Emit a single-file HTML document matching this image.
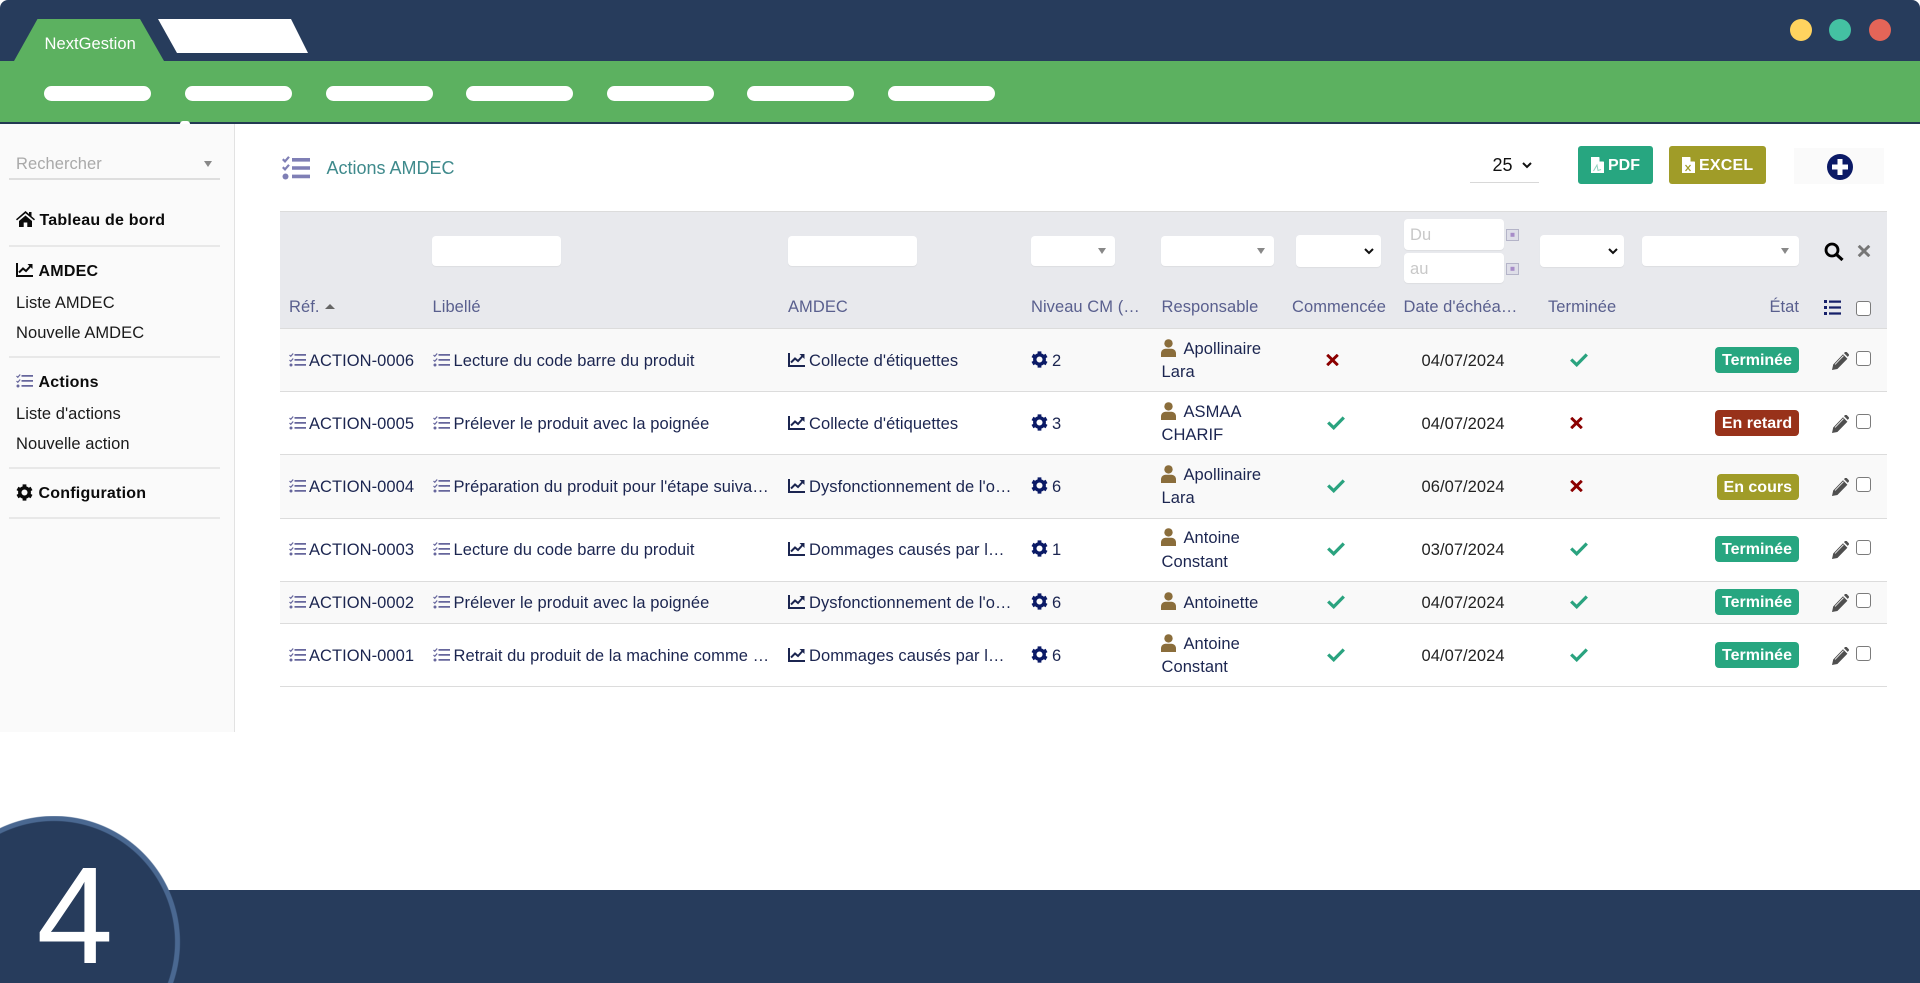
<!DOCTYPE html>
<html lang="fr"><head><meta charset="utf-8"><title>NextGestion</title>
<style>
html,body{margin:0;padding:0;background:#fff;width:1920px;height:983px;overflow:hidden}
body{font-family:"Liberation Sans",Arial,sans-serif;font-size:16px;color:#1b2550}
div,span,svg{position:absolute;display:block}
svg{overflow:visible}
#root{left:0;top:0;width:1920px;height:983px;overflow:hidden}
.t{height:24px;line-height:24px;white-space:nowrap;font-size:16.5px;letter-spacing:.05px;margin-top:-11px}
.s{color:#1a1a1a;margin-top:-11px}
.b{font-weight:700;color:#0b0b0b;font-size:16px;letter-spacing:.22px;margin-top:-10.500px}
.h{color:#595f8e;margin-top:-11px}
.hr{left:9px;width:211px;height:2px;background:#e8e8e8}
.inp{background:#fff;border-radius:4px;box-shadow:0 1px 1px rgba(0,0,0,.05)}
.tri{width:0;height:0;border-left:4.500px solid transparent;border-right:4.500px solid transparent;border-top:6px solid #888}
.pill{top:86px;width:107px;height:15px;border-radius:8px;background:#fff}
.dot{top:19px;width:22px;height:22px;border-radius:50%}
.rb{left:280px;width:1607px;background:#fff;border-bottom:1px solid #dcdcdc;box-sizing:border-box}
.g{background:#f9f9f9}
.row{left:0;top:0;width:1920px;height:0}
.ci{left:289px;top:-7.500px;width:17px;height:14px;color:#66669c}
.li{left:432.500px;top:-7.500px;width:17px;height:14px;color:#66669c}
.ai{left:788px;top:-7px;width:17px;height:14px}
.gi{left:1031px;top:-9px;width:17px;height:17px;color:#0b1a66}
.pi{left:1161px;width:15px;height:18px;color:#8a6d3b}
.ed{left:1832px;top:-8px;width:17px;height:18px;color:#4f4f4f}
.cb{left:1856px;top:-9px;width:15px;height:15px;box-sizing:border-box;border:1.500px solid #7b7b7b;border-radius:3px;background:#fff}
.yes{top:-7px;width:18px;height:14px;color:#2aa37f}
.no{top:-6px;width:13px;height:12px;color:#8b0000}
.bd{left:1715px;top:-13px;width:84px;height:26px;border-radius:4px;color:#fff;font-weight:700;text-align:center;line-height:27px}
.btn{top:146px;height:38px;border-radius:3px;color:#fff;font-weight:700;line-height:39px}
.d{left:1421.500px;color:#222}
</style></head><body>
<div id="root">
<svg width="0" height="0" style="left:0;top:0">
<defs>
<symbol id="tasks" viewBox="0 0 28 24"><path fill="currentColor" d="M10 2h18v3.600H10zM10 10.200h18v3.600H10zM10 18.600h18v3.600H10z"/><path fill="none" stroke="currentColor" stroke-width="2.200" d="M.8 3.200l2.200 2.200L7 .8M.8 11.200l2.200 2.200L7 8.800"/><circle cx="3.500" cy="20.500" r="3" fill="currentColor"/></symbol>
<symbol id="tasks2" viewBox="0 0 17 14"><path fill="currentColor" d="M5.500 1h11.500v1.700H5.500zM5.500 6h11.500v1.700H5.500zM5.500 11h11.500v1.700H5.500z"/><path fill="none" stroke="currentColor" stroke-width="1.200" d="M.5 2l1.300 1.300L4.200.5M.5 7l1.300 1.300L4.200 5.500"/><circle cx="2" cy="12" r="1.500" fill="currentColor"/></symbol>
<symbol id="home" viewBox="0 0 19 16"><path fill="currentColor" d="M9.500 0L13 3V1h2.500v4.200L19 8.300l-1 1.100-8.500-7.200L1 9.400 0 8.300zM3 10l6.500-5.500L16 10v6h-4.700v-4.500H7.700V16H3z"/></symbol>
<symbol id="chart" viewBox="0 0 17 14"><path fill="currentColor" d="M0 0h2v12h15v2H0z"/><path fill="none" stroke="currentColor" stroke-width="2" d="M3 9.500l4-4 3 2.500 5-5.500"/><path fill="currentColor" d="M11.500 1H16.500V6z"/></symbol>
<symbol id="cog" viewBox="-9 -9 18 18"><circle r="5" fill="none" stroke="currentColor" stroke-width="3.600"/><g fill="currentColor"><path d="M-2-8.600H2V-5H-2z"/><path d="M-2-8.600H2V-5H-2z" transform="rotate(60)"/><path d="M-2-8.600H2V-5H-2z" transform="rotate(120)"/><path d="M-2-8.600H2V-5H-2z" transform="rotate(180)"/><path d="M-2-8.600H2V-5H-2z" transform="rotate(240)"/><path d="M-2-8.600H2V-5H-2z" transform="rotate(300)"/></g></symbol>
<symbol id="user" viewBox="0 0 15 18"><circle cx="7.500" cy="4.400" r="4.200" fill="currentColor"/><path fill="currentColor" d="M0 18v-3.500C0 11.500 2.300 9.800 4.500 9.800h6c2.200 0 4.500 1.700 4.500 4.700V18z"/></symbol>
<symbol id="pen" viewBox="0 0 17 18"><path fill="currentColor" d="M0 18l1.200-5.500L11 2.200l4.400 4.600L5.400 17zM12 1.100L13 0c.5-.4 1.200-.4 1.700 0l2 2.100c.4.500.4 1.200 0 1.700l-1 1.100z"/><path stroke="#fff" stroke-width=".8" d="M3 12.500l8.500-8.800"/></symbol>
<symbol id="yes" viewBox="0 0 18 14"><path fill="none" stroke="currentColor" stroke-width="3.200" d="M1.200 6.500l5.500 5.300L16.800 1.500"/></symbol>
<symbol id="no" viewBox="0 0 13 12"><path fill="none" stroke="currentColor" stroke-width="2.900" d="M1.200.8l10.600 10.400M11.800.8L1.200 11.200"/></symbol>
<symbol id="cal" viewBox="0 0 13 12"><path fill="#b4b4c8" d="M0 0h13v12H0z"/><path fill="#dedee8" d="M1 1h11v10H1z"/><path fill="#a78cc8" d="M4.500 3.800h4v4h-4z"/></symbol>
<symbol id="chev" viewBox="0 0 10 7"><path fill="none" stroke="#111" stroke-width="2" d="M1 1l4 4 4-4"/></symbol>
</defs></svg>

<!-- Top bars -->
<div style="left:0;top:0;width:1920px;height:61px;background:#273c5c;border-radius:8px 8px 0 0"></div>
<div style="left:0;top:61px;width:1920px;height:61px;background:#5cb160"></div>
<div style="left:0;top:122px;width:1920px;height:2px;background:#233a52"></div>
<svg style="left:0;top:0" width="320" height="62"><polygon points="37.500,19 140,19 164,61 14,61" fill="#5cb160"/><polygon points="158,19 291,19 308,53 177,53" fill="#fff"/></svg>
<div class="t" style="left:44.500px;top:43px;color:#fff">NextGestion</div>
<div class="pill" style="left:44px"></div><div class="pill" style="left:185px"></div><div class="pill" style="left:326px"></div><div class="pill" style="left:466px"></div><div class="pill" style="left:607px"></div><div class="pill" style="left:747px"></div><div class="pill" style="left:888px"></div>
<div style="left:180px;top:121px;width:10px;height:3px;background:#fff;border-radius:5px 5px 0 0"></div>
<div class="dot" style="left:1790px;background:#ffd35f"></div>
<div class="dot" style="left:1829px;background:#44c1a2"></div>
<div class="dot" style="left:1869px;background:#e46558"></div>

<!-- Sidebar -->
<div style="left:0;top:124px;width:234px;height:608px;background:#fafafa;border-right:1px solid #e2e2e2"></div>
<div class="t" style="left:16px;top:163px;color:#a9a9a9">Rechercher</div>
<div class="tri" style="left:204px;top:161px"></div>
<div style="left:9px;top:178px;width:211px;height:2px;background:#dedede"></div>
<svg style="left:16px;top:211px;color:#0b0b0b" width="19" height="16"><use href="#home"/></svg>
<div class="t b" style="left:39.500px;top:219px">Tableau de bord</div>
<div class="hr" style="top:245px"></div>
<svg style="left:16px;top:263px;color:#0b0b0b" width="17" height="14"><use href="#chart"/></svg>
<div class="t b" style="left:38.500px;top:270px">AMDEC</div>
<div class="t s" style="left:16px;top:302px">Liste AMDEC</div>
<div class="t s" style="left:16px;top:332px">Nouvelle AMDEC</div>
<div class="hr" style="top:356px"></div>
<svg style="left:16px;top:374px;color:#66669c" width="17" height="14"><use href="#tasks2"/></svg>
<div class="t b" style="left:38.500px;top:381px">Actions</div>
<div class="t s" style="left:16px;top:413px">Liste d'actions</div>
<div class="t s" style="left:16px;top:443px">Nouvelle action</div>
<div class="hr" style="top:467px"></div>
<svg style="left:16px;top:484px;color:#0b0b0b" width="17" height="17"><use href="#cog"/></svg>
<div class="t b" style="left:38.500px;top:492px">Configuration</div>
<div class="hr" style="top:517px"></div>

<!-- Title and toolbar -->
<svg style="left:281.500px;top:156px;color:#7f7fb5" width="28" height="24"><use href="#tasks"/></svg>
<div class="t" style="left:326.500px;top:168px;font-size:18px;letter-spacing:0;margin-top:-12px;color:#3f8a8c">Actions AMDEC</div>
<div class="t" style="left:1492.500px;top:165px;font-size:18px;letter-spacing:0;margin-top:-12px;color:#111">25</div>
<svg style="left:1522px;top:161.500px" width="10" height="7"><use href="#chev"/></svg>
<div style="left:1470px;top:182px;width:69px;height:1px;background:#d8d8d8"></div>
<div class="btn" style="left:1578px;width:75px;background:#27a680"><svg style="left:12.500px;top:11px" width="13" height="16"><path fill="#fff" d="M0 0h8l5 5v11H0z"/><path fill="#27a680" d="M8.500 0v4.500H13z"/><path fill="none" stroke="#8fd3bf" d="M2.500 14l3.500-6 1 5.500 3-1"/></svg><span style="left:30px;top:0">PDF</span></div>
<div class="btn" style="left:1669px;width:97px;background:#a09c28"><svg style="left:12.500px;top:11px" width="13" height="16"><path fill="#fff" d="M0 0h8l5 5v11H0z"/><path fill="#a09c28" d="M8.500 0v4.500H13z"/><path fill="none" stroke="#a09c28" stroke-width="1.300" d="M3.500 8l5 6M8.500 8l-5 6"/></svg><span style="left:30px;top:0;letter-spacing:.2px">EXCEL</span></div>
<div style="left:1793.500px;top:148px;width:90.500px;height:36px;background:#fafafa"></div>
<svg style="left:1826.500px;top:154px" width="26" height="26"><circle cx="13" cy="13" r="13" fill="#0b1a66"/><path fill="#fff" d="M10.500 5h5v5.500H21v5h-5.500v5.500h-5v-5.500H5v-5h5.500z"/></svg>

<!-- Table head -->
<div style="left:280px;top:211px;width:1607px;height:118px;background:#e8e9ed;border-top:1px solid #dcdcdc;border-bottom:1px solid #dcdcdc;box-sizing:border-box"></div>
<div class="inp" style="left:432px;top:236px;width:129px;height:30px"></div>
<div class="inp" style="left:788px;top:236px;width:129px;height:30px"></div>
<div class="inp" style="left:1031px;top:236px;width:84px;height:30px"></div><div class="tri" style="left:1097.500px;top:248px"></div>
<div class="inp" style="left:1161px;top:236px;width:113px;height:30px"></div><div class="tri" style="left:1257px;top:248px"></div>
<div class="inp" style="left:1295.500px;top:235px;width:85.500px;height:32px"></div><svg style="left:1364px;top:248px" width="10" height="7"><use href="#chev"/></svg>
<div class="inp" style="left:1404px;top:219px;width:100px;height:31px"></div><div class="t" style="left:1410px;top:234px;color:#c8c8c8">Du</div>
<div class="inp" style="left:1404px;top:253px;width:100px;height:30px"></div><div class="t" style="left:1410px;top:268px;color:#c8c8c8">au</div>
<svg style="left:1506px;top:229px" width="13" height="12"><use href="#cal"/></svg>
<svg style="left:1506px;top:263px" width="13" height="12"><use href="#cal"/></svg>
<div class="inp" style="left:1540px;top:235px;width:84px;height:32px"></div><svg style="left:1608px;top:248px" width="10" height="7"><use href="#chev"/></svg>
<div class="inp" style="left:1642px;top:236px;width:157px;height:30px"></div><div class="tri" style="left:1781px;top:248px"></div>
<svg style="left:1824px;top:242px" width="20" height="19"><circle cx="8" cy="8" r="6" fill="none" stroke="#000" stroke-width="2.800"/><path stroke="#000" stroke-width="3.200" d="M12.500 12.500l6 5.500"/></svg>
<svg style="left:1857px;top:245px;color:#767676" width="14" height="12"><use href="#no"/></svg>

<div class="t h" style="left:289px;top:306px">Réf.</div>
<div style="left:324.500px;top:304px;width:0;height:0;border-left:5px solid transparent;border-right:5px solid transparent;border-bottom:5px solid #666"></div>
<div class="t h" style="left:432.500px;top:306px">Libellé</div>
<div class="t h" style="left:788px;top:306px">AMDEC</div>
<div class="t h" style="left:1031px;top:306px">Niveau CM (…</div>
<div class="t h" style="left:1161.500px;top:306px">Responsable</div>
<div class="t h" style="left:1292px;top:306px">Commencée</div>
<div class="t h" style="left:1403.500px;top:306px">Date d'échéa…</div>
<div class="t h" style="left:1548px;top:306px">Terminée</div>
<div class="t h" style="right:121px;top:306px">État</div>
<svg style="left:1824px;top:300px;color:#16206a" width="17" height="15"><path fill="currentColor" d="M0 0h3v3H0zM5 .5h12v2.200H5zM0 6h3v3H0zM5 6.400h12v2.200H5zM0 12h3v3H0zM5 12.400h12v2.200H5z"/></svg>
<div class="cb" style="top:301px"></div>

<!-- Rows -->
<div class="rb g" style="top:329px;height:63px"></div>
<div class="rb" style="top:392px;height:63px"></div>
<div class="rb g" style="top:455px;height:64px"></div>
<div class="rb" style="top:519px;height:63px"></div>
<div class="rb g" style="top:582px;height:42px"></div>
<div class="rb" style="top:624px;height:63px"></div>

<div class="row" style="top:360px">
<svg class="ci"><use href="#tasks2"/></svg><div class="t" style="left:309px">ACTION-0006</div>
<svg class="li"><use href="#tasks2"/></svg><div class="t" style="left:453.500px">Lecture du code barre du produit</div>
<svg class="ai"><use href="#chart"/></svg><div class="t" style="left:809px">Collecte d'étiquettes</div>
<svg class="gi"><use href="#cog"/></svg><div class="t" style="left:1052px">2</div>
<svg class="pi" style="top:-21px"><use href="#user"/></svg><div class="t" style="left:1183.500px;top:-12px">Apollinaire</div><div class="t" style="left:1161.500px;top:11px">Lara</div>
<svg class="no" style="left:1326px"><use href="#no"/></svg>
<div class="t d">04/07/2024</div>
<svg class="yes" style="left:1570px"><use href="#yes"/></svg>
<div class="bd" style="background:#27a680">Terminée</div>
<svg class="ed"><use href="#pen"/></svg><div class="cb"></div>
</div>

<div class="row" style="top:423px">
<svg class="ci"><use href="#tasks2"/></svg><div class="t" style="left:309px">ACTION-0005</div>
<svg class="li"><use href="#tasks2"/></svg><div class="t" style="left:453.500px">Prélever le produit avec la poignée</div>
<svg class="ai"><use href="#chart"/></svg><div class="t" style="left:809px">Collecte d'étiquettes</div>
<svg class="gi"><use href="#cog"/></svg><div class="t" style="left:1052px">3</div>
<svg class="pi" style="top:-21px"><use href="#user"/></svg><div class="t" style="left:1183.500px;top:-12px">ASMAA</div><div class="t" style="left:1161.500px;top:11px">CHARIF</div>
<svg class="yes" style="left:1327px"><use href="#yes"/></svg>
<div class="t d">04/07/2024</div>
<svg class="no" style="left:1569.500px"><use href="#no"/></svg>
<div class="bd" style="background:#98321a">En retard</div>
<svg class="ed"><use href="#pen"/></svg><div class="cb"></div>
</div>

<div class="row" style="top:486px">
<svg class="ci"><use href="#tasks2"/></svg><div class="t" style="left:309px">ACTION-0004</div>
<svg class="li"><use href="#tasks2"/></svg><div class="t" style="left:453.500px">Préparation du produit pour l'étape suiva…</div>
<svg class="ai"><use href="#chart"/></svg><div class="t" style="left:809px">Dysfonctionnement de l'o…</div>
<svg class="gi"><use href="#cog"/></svg><div class="t" style="left:1052px">6</div>
<svg class="pi" style="top:-21px"><use href="#user"/></svg><div class="t" style="left:1183.500px;top:-12px">Apollinaire</div><div class="t" style="left:1161.500px;top:11px">Lara</div>
<svg class="yes" style="left:1327px"><use href="#yes"/></svg>
<div class="t d">06/07/2024</div>
<svg class="no" style="left:1569.500px"><use href="#no"/></svg>
<div class="bd" style="left:1716.500px;top:-12px;width:82.500px;background:#a09c28">En cours</div>
<svg class="ed"><use href="#pen"/></svg><div class="cb"></div>
</div>

<div class="row" style="top:549px">
<svg class="ci"><use href="#tasks2"/></svg><div class="t" style="left:309px">ACTION-0003</div>
<svg class="li"><use href="#tasks2"/></svg><div class="t" style="left:453.500px">Lecture du code barre du produit</div>
<svg class="ai"><use href="#chart"/></svg><div class="t" style="left:809px">Dommages causés par l…</div>
<svg class="gi"><use href="#cog"/></svg><div class="t" style="left:1052px">1</div>
<svg class="pi" style="top:-21px"><use href="#user"/></svg><div class="t" style="left:1183.500px;top:-12px">Antoine</div><div class="t" style="left:1161.500px;top:12px">Constant</div>
<svg class="yes" style="left:1327px"><use href="#yes"/></svg>
<div class="t d">03/07/2024</div>
<svg class="yes" style="left:1570px"><use href="#yes"/></svg>
<div class="bd" style="background:#27a680">Terminée</div>
<svg class="ed"><use href="#pen"/></svg><div class="cb"></div>
</div>

<div class="row" style="top:602px">
<svg class="ci"><use href="#tasks2"/></svg><div class="t" style="left:309px">ACTION-0002</div>
<svg class="li"><use href="#tasks2"/></svg><div class="t" style="left:453.500px">Prélever le produit avec la poignée</div>
<svg class="ai"><use href="#chart"/></svg><div class="t" style="left:809px">Dysfonctionnement de l'o…</div>
<svg class="gi"><use href="#cog"/></svg><div class="t" style="left:1052px">6</div>
<svg class="pi" style="top:-10px"><use href="#user"/></svg><div class="t" style="left:1183.500px">Antoinette</div>
<svg class="yes" style="left:1327px"><use href="#yes"/></svg>
<div class="t d">04/07/2024</div>
<svg class="yes" style="left:1570px"><use href="#yes"/></svg>
<div class="bd" style="background:#27a680">Terminée</div>
<svg class="ed"><use href="#pen"/></svg><div class="cb"></div>
</div>

<div class="row" style="top:655px">
<svg class="ci"><use href="#tasks2"/></svg><div class="t" style="left:309px">ACTION-0001</div>
<svg class="li"><use href="#tasks2"/></svg><div class="t" style="left:453.500px">Retrait du produit de la machine comme …</div>
<svg class="ai"><use href="#chart"/></svg><div class="t" style="left:809px">Dommages causés par l…</div>
<svg class="gi"><use href="#cog"/></svg><div class="t" style="left:1052px">6</div>
<svg class="pi" style="top:-21px"><use href="#user"/></svg><div class="t" style="left:1183.500px;top:-12px">Antoine</div><div class="t" style="left:1161.500px;top:11px">Constant</div>
<svg class="yes" style="left:1327px"><use href="#yes"/></svg>
<div class="t d">04/07/2024</div>
<svg class="yes" style="left:1570px"><use href="#yes"/></svg>
<div class="bd" style="background:#27a680">Terminée</div>
<svg class="ed"><use href="#pen"/></svg><div class="cb"></div>
</div>

<!-- Footer -->
<div style="left:0;top:890px;width:1920px;height:93px;background:#273c5c"></div>
<div style="left:0;top:816px;width:181px;height:167px;background:radial-gradient(circle at 54px 126px,#273c5c 120.500px,#4a6891 121.500px,#4a6891 125.500px,rgba(74,104,145,0) 126.500px)"></div>
<div style="left:36.500px;top:851px;height:130px;font-size:138px;line-height:130px;color:#fff">4</div>
</div>
</body></html>
